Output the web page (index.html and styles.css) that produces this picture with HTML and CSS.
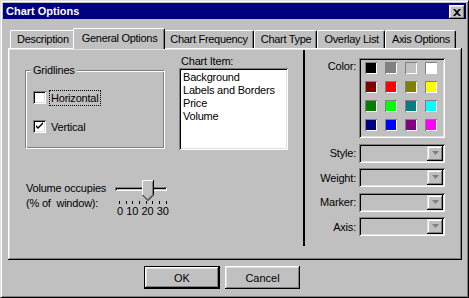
FILE: index.html
```html
<!DOCTYPE html>
<html>
<head>
  <title>Chart Options</title>
  <meta charset="UTF-8" />
  <link rel="stylesheet" href="styles.css">
</head>
<body>
  <div class="window">
    <div class="titlebar">
      <span class="title">Chart Options</span>
      <span class="close">
        <svg width="8" height="7" viewBox="0 0 8 7"><path d="M0 0h2l2 2 2-2h2L5 3.5 8 7H6L4 5 2 7H0l3-3.5z" fill="#000"/></svg>
      </span>
    </div>

    <div class="tabs">
      <div class="tab">Description</div>
      <div class="tab tab-active">General Options</div>
      <div class="tab">Chart Frequency</div>
      <div class="tab">Chart Type</div>
      <div class="tab">Overlay List</div>
      <div class="tab">Axis Options</div>
    </div>

    <div class="panel">
      <div class="left-col">
        <div class="top-row">
          <div class="group">
            <span class="group-title">Gridlines</span>
            <div class="check-row">
              <span class="checkbox"></span>
              <span class="check-label focus">Horizontal</span>
            </div>
            <div class="check-row second">
              <span class="checkbox">
                <svg width="9" height="9" viewBox="0 0 9 9"><path d="M1 3v2l2 2 5-5V0L3 5z" fill="#000"/></svg>
              </span>
              <span class="check-label">Vertical</span>
            </div>
          </div>

          <div class="list-col">
            <div class="list-label">Chart Item:</div>
            <div class="listbox">
              <div>Background</div>
              <div>Labels and Borders</div>
              <div>Price</div>
              <div>Volume</div>
            </div>
          </div>
        </div>

        <div class="volume-row">
          <div class="volume-label">Volume occupies<br>(% of&nbsp; window):</div>
          <div class="slider">
            <div class="track"></div>
            <svg class="thumb" width="12" height="21" viewBox="0 0 12 21">
              <polygon points="0.5,0.5 11.5,0.5 11.5,15 6,20.5 0.5,15" fill="#c0c0c0"/>
              <polyline points="0.5,15 0.5,0.5 11,0.5" stroke="#fff" fill="none"/>
              <polyline points="11.5,0 11.5,15 6,20.5 0.5,15" stroke="#000" fill="none"/>
              <polyline points="10.5,1.5 10.5,14.5 6,19" stroke="#808080" fill="none"/>
            </svg>
            <div class="ticks"></div>
            <div class="tick-labels">0 10 20 30</div>
          </div>
        </div>
      </div>

      <div class="right-col">
        <div class="prop-row color-row">
          <span class="prop-label">Color:</span>
          <div class="colors">
            <span class="swatch" style="background:#000000"></span>
            <span class="swatch" style="background:#808080"></span>
            <span class="swatch" style="background:#c0c0c0"></span>
            <span class="swatch" style="background:#ffffff"></span>
            <span class="swatch" style="background:#800000"></span>
            <span class="swatch" style="background:#ff0000"></span>
            <span class="swatch" style="background:#808000"></span>
            <span class="swatch" style="background:#ffff00"></span>
            <span class="swatch" style="background:#008000"></span>
            <span class="swatch" style="background:#00ff00"></span>
            <span class="swatch" style="background:#008080"></span>
            <span class="swatch" style="background:#00ffff"></span>
            <span class="swatch" style="background:#000080"></span>
            <span class="swatch" style="background:#0000ff"></span>
            <span class="swatch" style="background:#800080"></span>
            <span class="swatch" style="background:#ff00ff"></span>
          </div>
        </div>
        <div class="prop-row">
          <span class="prop-label">Style:</span>
          <div class="combo"><span class="combo-btn"><svg width="7" height="5" viewBox="0 0 7 5"><path d="M0 0h7L3.5 4z" fill="#808080"/></svg></span></div>
        </div>
        <div class="prop-row">
          <span class="prop-label">Weight:</span>
          <div class="combo"><span class="combo-btn"><svg width="7" height="5" viewBox="0 0 7 5"><path d="M0 0h7L3.5 4z" fill="#808080"/></svg></span></div>
        </div>
        <div class="prop-row">
          <span class="prop-label">Marker:</span>
          <div class="combo"><span class="combo-btn"><svg width="7" height="5" viewBox="0 0 7 5"><path d="M0 0h7L3.5 4z" fill="#808080"/></svg></span></div>
        </div>
        <div class="prop-row">
          <span class="prop-label">Axis:</span>
          <div class="combo"><span class="combo-btn"><svg width="7" height="5" viewBox="0 0 7 5"><path d="M0 0h7L3.5 4z" fill="#808080"/></svg></span></div>
        </div>
      </div>
    </div>

    <div class="buttons">
      <button class="btn btn-default">OK</button>
      <button class="btn">Cancel</button>
    </div>
  </div>
</body>
</html>
```

FILE: styles.css
```css
body { margin: 0; background: #c0c0c0; font-family: "Liberation Sans", Arial, sans-serif; font-size: 11px; letter-spacing: -0.2px; color: #000; }

.window { box-sizing: border-box; width: 469px; height: 298px; padding: 2px; background: #c0c0c0;
  border: 1px solid; border-color: #dfdfdf #000 #000 #dfdfdf; box-shadow: inset 1px 1px #fff, inset -1px -1px #808080; }

.titlebar { height: 16px; background: #000080; display: flex; align-items: flex-start; justify-content: space-between; }
.title { color: #fff; font-weight: bold; letter-spacing: 0; line-height: 16px; padding-left: 3px; }
.close { width: 16px; height: 14px; margin: 2px 1px 0 0; background: #c0c0c0; display: flex; align-items: center; justify-content: center;
  box-shadow: inset -1px -1px #000, inset 1px 1px #fff, inset -2px -2px #808080, inset 2px 2px #dfdfdf; }

.tabs { display: flex; align-items: flex-end; height: 20px; margin: 9px 0 0 5px; padding-left: 2px; }
.tab { height: 18px; box-sizing: border-box; padding: 0 5px 0 6px; line-height: 17px; white-space: nowrap; letter-spacing: -0.3px;
  border-top: 1px solid #fff; border-left: 1px solid #fff; border-right: 1px solid #000; border-radius: 2px 2px 0 0;
  box-shadow: inset -1px 0 #808080; }
.tab-active { position: relative; z-index: 1; height: 21px; margin: 0 -2px -1px; padding: 0 7px 0 8px; line-height: 19px; background: #c0c0c0; }

.panel { display: flex; height: 212px; margin-left: 5px; width: 454px; box-sizing: border-box;
  box-shadow: inset -1px -1px #000, inset 1px 1px #fff, inset -2px -2px #808080, inset 2px 2px #dfdfdf; }

.left-col { width: 295px; }
.top-row { display: flex; align-items: flex-start; }

.group { position: relative; width: 140px; height: 79px; box-sizing: border-box; margin: 22px 0 0 17px; padding: 20px 0 0 7px;
  border: 1px solid #808080; border-right-color: #fff; border-bottom-color: #fff;
  box-shadow: inset 1px 1px #fff, inset -1px -1px #808080; }
.group-title { position: absolute; top: -7px; left: 5px; padding: 0 2px; line-height: 13px; background: #c0c0c0; }
.check-row { display: flex; align-items: center; height: 13px; }
.check-row.second { margin-top: 16px; }
.checkbox { width: 13px; height: 13px; box-sizing: border-box; background: #fff; display: flex; align-items: center; justify-content: center;
  box-shadow: inset 1px 1px #808080, inset -1px -1px #fff, inset 2px 2px #000, inset -2px -2px #dfdfdf; }
.check-label { margin-left: 4px; padding: 1px 1px; line-height: 12px; }
.focus { outline: 1px dotted #000; }

.list-col { margin: 6px 0 0 14px; }
.list-label { line-height: 14px; padding-left: 2px; }
.listbox { width: 109px; height: 82px; box-sizing: border-box; background: #fff; padding: 3px 4px; line-height: 13px;
  box-shadow: inset 1px 1px #808080, inset -1px -1px #fff, inset 2px 2px #000, inset -2px -2px #dfdfdf; }

.volume-row { display: flex; margin: 31px 0 0 18px; }
.volume-label { width: 81px; line-height: 15px; white-space: nowrap; }
.slider { position: relative; width: 56px; margin-left: 8px; }
.track { width: 52px; height: 4px; margin-top: 6px; box-sizing: border-box;
  box-shadow: inset 1px 1px #808080, inset -1px -1px #fff, inset 2px 2px #000; }
.thumb { position: absolute; left: 27px; top: -1px; }
.ticks { width: 49px; height: 3px; margin: 10px 0 0 4px;
  background: repeating-linear-gradient(to right, #000 0 1px, transparent 1px 6.7px); }
.tick-labels { line-height: 13px; margin-top: 1px; padding-left: 2px; white-space: nowrap; letter-spacing: 0; }

.right-col { align-self: flex-start; height: 196px; margin-top: 2px; border-left: 2px solid #000; box-sizing: border-box; }
.prop-row { display: flex; align-items: center; height: 19px; margin-top: 5.5px; }
.prop-label { width: 51px; padding-right: 3px; text-align: right; }
.color-row { height: auto; align-items: flex-start; margin-top: 8px; margin-bottom: 3px; }
.color-row .prop-label { margin-top: 2px; line-height: 13px; }

.colors { width: 86px; height: 80px; box-sizing: border-box; padding: 4px 0 0 6px; display: grid;
  grid-template-columns: repeat(4, 12px); grid-auto-rows: 12px; column-gap: 8px; row-gap: 7px;
  box-shadow: inset 1px 1px #808080, inset -1px -1px #fff, inset 2px 2px #000, inset -2px -2px #dfdfdf; }
.swatch { box-shadow: inset 1px 1px #808080, inset -1px -1px #fff; }

.combo { width: 86px; height: 19px; box-sizing: border-box; padding: 2px; display: flex; justify-content: flex-end;
  box-shadow: inset 1px 1px #808080, inset -1px -1px #fff, inset 2px 2px #000, inset -2px -2px #dfdfdf; }
.combo-btn { width: 16px; height: 15px; display: flex; align-items: center; justify-content: center;
  box-shadow: inset -1px -1px #000, inset 1px 1px #dfdfdf, inset -2px -2px #808080, inset 2px 2px #fff; }

.buttons { display: flex; margin: 6px 0 0 141px; gap: 5px; }
.btn { width: 75px; height: 23px; padding: 0; border: none; background: #c0c0c0; font: inherit; color: #000;
  box-shadow: inset -1px -1px #000, inset 1px 1px #fff, inset -2px -2px #808080, inset 2px 2px #dfdfdf; }
.btn-default { width: 76px; border: 1px solid #000; }
```
